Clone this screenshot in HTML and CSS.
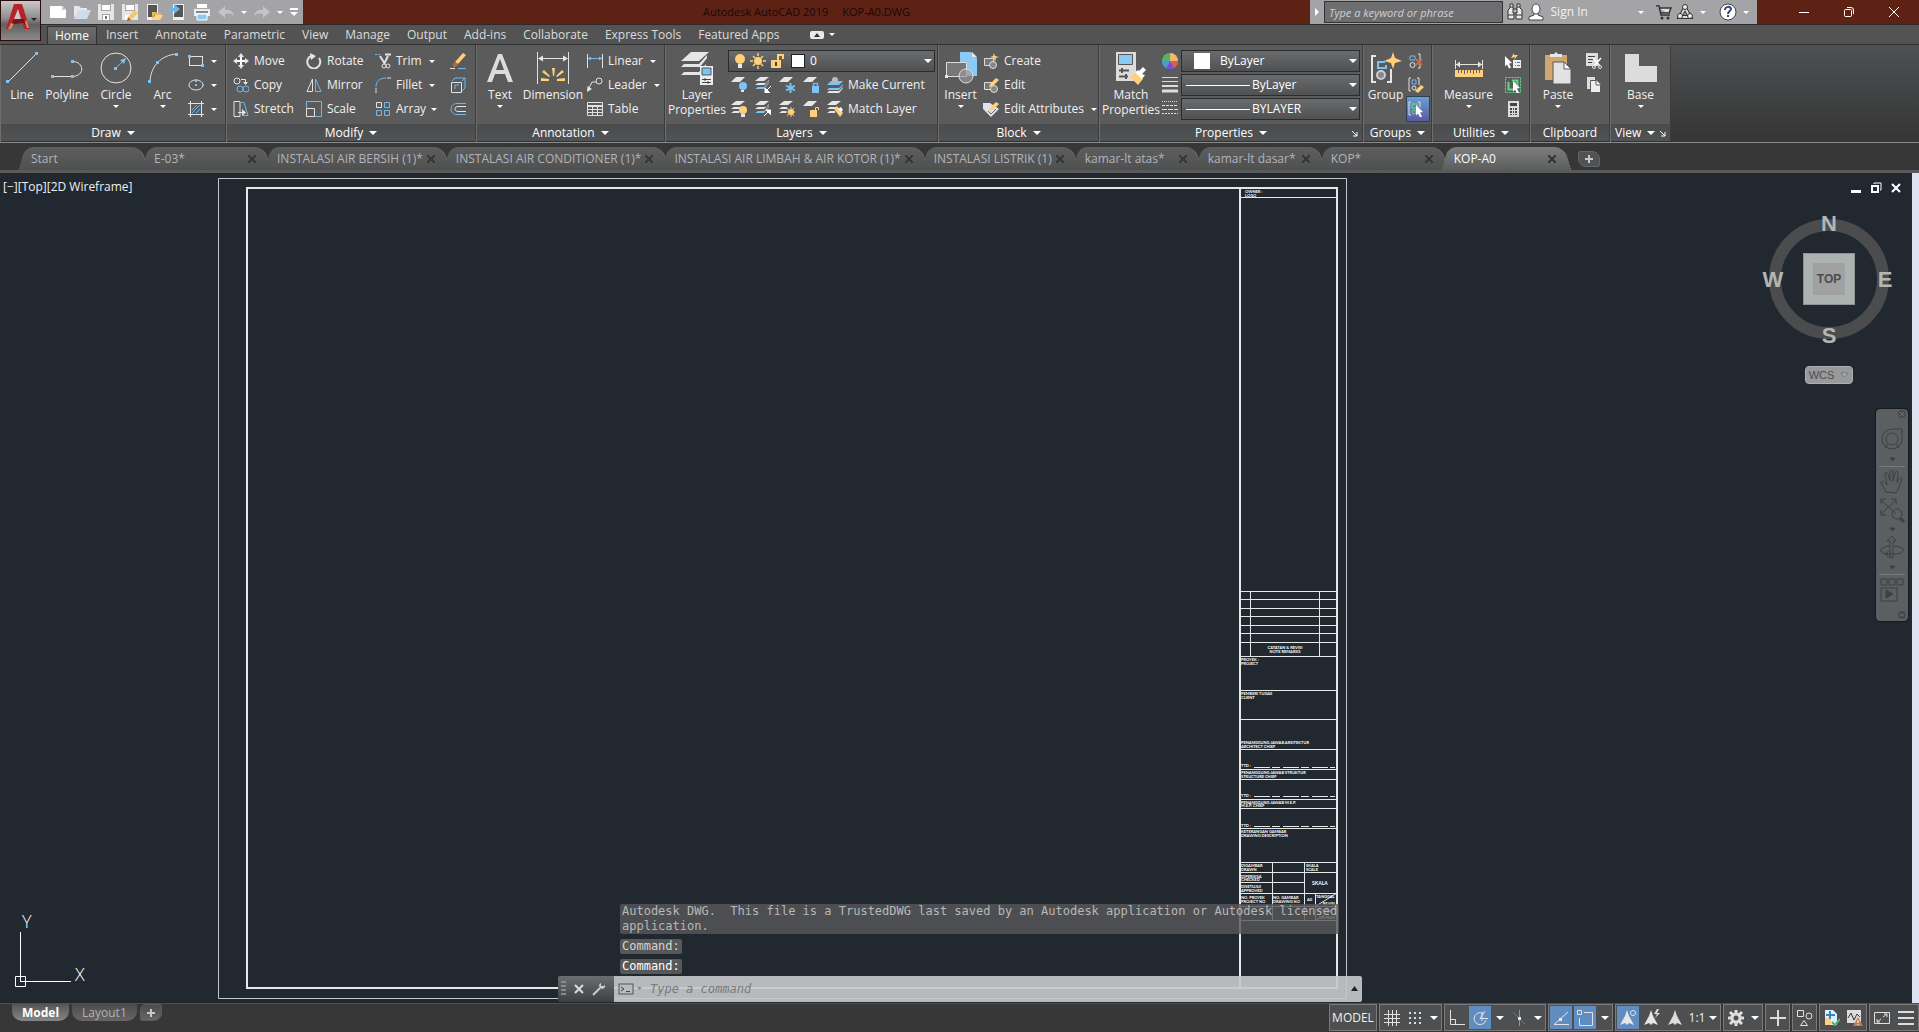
FILE: index.html
```html
<!DOCTYPE html>
<html lang="en">
<head>
  <meta charset="UTF-8" />
  <meta name="viewport" content="width=device-width, initial-scale=1.0" />
  <title>Autodesk AutoCAD 2019 - KOP-A0.DWG</title>
  <link rel="stylesheet" href="styles.css">
</head>
<body>
  <header class="titlebar">
    <button class="app-menu" aria-label="Application menu">
      <svg width="32" height="30" viewBox="0 0 32 30"><path d="M1 26 9 1h8l8 25h-6l-2-7H9l-3 7z" fill="#b8232b"/><path d="M13 6 9 16h7z" fill="#c9c9c9"/><path d="M9 16 4 26l6-5 9-1 2 4-2-8z" fill="#7d1419"/><path d="M6 20l-3 6h3l3-5zM20 19l2 6h2l-2-8z" fill="#c98d6b"/></svg>
      <span class="caret dark"></span>
    </button>
    <div class="quick-access">
      <button aria-label="New"><svg width="18" height="16"><path d="M1 2h12l4 4v8H1z" fill="#fff"/><path d="M13 2v4h4" fill="#ccc"/></svg></button>
      <button aria-label="Open"><svg width="18" height="16"><path d="M1 13V2h5l2 2h6v3" fill="#e8e8e8"/><path d="M1 15 5 6h13l-4 9z" fill="#cfdcec"/></svg></button>
      <button aria-label="Save"><svg width="18" height="18"><path d="M1 1h16v16H1z" fill="#e6e6e6"/><path d="M4 1h10v7H4zM5 11h8v6H5z" fill="#a5a5a7"/><path d="M5 2h8v5H5zM6 12h6v5H6z" fill="#fff"/><path d="M8 13h2v3H8z" fill="#777"/></svg></button>
      <button aria-label="Save As"><svg width="18" height="18"><path d="M1 1h16v16H1z" fill="#e6e6e6"/><path d="M4 1h10v7H4z" fill="#a5a5a7"/><path d="M5 2h8v5H5zM4 12h6v5H4z" fill="#fff"/><path d="m7 14 7-7 3 3-7 7z" fill="#f6c56b"/><path d="m7 14 3 3-4 1z" fill="#a85c3a"/></svg></button>
      <button aria-label="Open from Web"><svg width="18" height="18"><rect x="2" y="1" width="11" height="16" fill="#f0f0f0"/><rect x="3" y="2" width="9" height="12" fill="#555"/><path d="M7 17V9h4l1 1h4v2h-7z" fill="#e8b860"/><path d="m7 17 3-5h8l-3 5z" fill="#ffd484"/></svg></button>
      <button aria-label="Save to Web"><svg width="18" height="18"><rect x="4" y="1" width="11" height="16" fill="#f0f0f0"/><rect x="5" y="2" width="9" height="12" fill="#555"/><path d="M0 5h5V1l6 5-6 5V8H0z" fill="#6cb4ea"/></svg></button>
      <button aria-label="Plot"><svg width="18" height="18"><path d="M4 1h10v4H4z" fill="#fff"/><path d="M1 6h16v7H1z" fill="#eee"/><path d="M3 8h12v2H3z" fill="#888"/><path d="M4 11h10v6H4z" fill="#8cc8f4" stroke="#fff"/></svg></button>
      <button aria-label="Undo"><svg width="18" height="16"><path d="M1 8l7-6v4c5-1 8 1 9 6-3-3-6-3-9-2v4z" fill="#c4c4c6"/></svg></button>
      <button class="narrow" aria-label="Undo list"><span class="caret"></span></button>
      <button aria-label="Redo"><svg width="18" height="16"><path d="M17 8l-7-6v4c-5-1-8 1-9 6 3-3 6-3 9-2v4z" fill="#c4c4c6"/></svg></button>
      <button class="narrow" aria-label="Redo list"><span class="caret"></span></button>
      <button class="customize" aria-label="Customize toolbar"><span class="caret wide"></span></button>
    </div>
    <h1 class="title"><span>Autodesk AutoCAD 2019</span><span>KOP-A0.DWG</span></h1>
    <div class="info-center">
      <button class="fold" aria-label="Collapse search"><svg width="6" height="10"><path d="M1 1v8l4-4z" fill="#fff"/></svg></button>
      <input class="search" type="text" placeholder="Type a keyword or phrase" aria-label="Search">
      <button aria-label="Find"><svg width="18" height="18"><path d="M4 1h3v4l1 2v9H2V7l2-2zM11 1h3v4l2 2v9h-6V7l1-2z" fill="#e8e8e8" stroke="#333"/><path d="M7 6h4v4H7zM2 12h6M10 12h6M4 4h3M11 4h3" stroke="#333" fill="#bbb"/></svg></button>
      <button class="sign-in"><svg width="18" height="18"><path d="M7 10v2l-5 2v3h14v-3l-5-2v-2" fill="#fff" stroke="#444"/><ellipse cx="9" cy="6" rx="4" ry="5" fill="#fff" stroke="#444"/></svg>Sign In<span class="caret"></span></button>
      <button aria-label="App Store"><svg width="18" height="18"><path d="M1 3h3l2 9h9M5 5h11l-2 5H6" fill="#ddd" stroke="#333" stroke-width="1.5"/><circle cx="7" cy="15" r="1.5" fill="#333"/><circle cx="13" cy="15" r="1.5" fill="#333"/></svg></button>
      <button class="with-caret" aria-label="Stay connected"><svg width="18" height="18"><path d="m9 5 5 9H4z" fill="none" stroke="#333" stroke-width="4"/><path d="m9 5 5 9H4z" fill="none" stroke="#ddd" stroke-width="2"/><circle cx="9" cy="4" r="2.5" fill="#eee" stroke="#333"/><circle cx="4" cy="13" r="2.5" fill="#eee" stroke="#333"/><circle cx="14" cy="13" r="2.5" fill="#eee" stroke="#333"/></svg><span class="caret"></span></button>
      <button class="with-caret" aria-label="Help"><svg width="18" height="18"><circle cx="9" cy="9" r="8" fill="#fff" stroke="#444"/><path d="M6 7c0-4 6-4 6-1 0 2-3 2-3 5m0 1v2" fill="none" stroke="#34447c" stroke-width="2"/></svg><span class="caret"></span></button>
    </div>
    <div class="window-controls">
      <button aria-label="Minimize"><svg width="12" height="12"><path d="M1 6.5h10" stroke="#fff"/></svg></button>
      <button aria-label="Restore"><svg width="12" height="12" fill="none" stroke="#fff"><rect x="1.5" y="3.5" width="7" height="7" rx="1"/><path d="M4 1.5h4q2.500 0 2.500 2.500v4"/></svg></button>
      <button aria-label="Close"><svg width="12" height="12"><path d="m1 1 10 10M11 1 1 11" stroke="#fff"/></svg></button>
    </div>
  </header>

  <nav class="ribbon-tabs">
    <button class="active">Home</button>
    <button>Insert</button>
    <button>Annotate</button>
    <button>Parametric</button>
    <button>View</button>
    <button>Manage</button>
    <button>Output</button>
    <button>Add-ins</button>
    <button>Collaborate</button>
    <button>Express Tools</button>
    <button>Featured Apps</button>
    <button class="minimize" aria-label="Minimize ribbon"><svg width="14" height="8"><rect width="14" height="8" rx="2" fill="#e8eaec"/><path d="M4 6h6L7 2z" fill="#333"/></svg><span class="caret"></span></button>
  </nav>

  <div class="ribbon">
    <section class="panel draw">
      <div class="panel-body">
        <button class="big"><svg width="32" height="32"><path d="M2 30 30 2" class="w"/><path d="M0 28h3v3H0zM29 0h3v3h-3z" class="bf"/></svg>Line</button>
        <button class="big"><svg width="32" height="32"><path d="M2 24.500h19M21 9.500c13 0 13 15 0 15" class="w"/><path d="M0 23h3v3H0zM20 23h3v3h-3zM20 8h3v3h-3z" class="bf"/></svg>Polyline</button>
        <button class="big"><svg width="32" height="32"><circle cx="16" cy="16" r="15" class="w"/><path d="m16 16 8-8" class="b"/><path d="M14 15h3v3h-3zM26 6l-6 2 4 4z" class="bf"/></svg>Circle<span class="caret"></span></button>
        <button class="big"><svg width="32" height="32"><path d="M3 29C4 14 14 3 30 2" class="w"/><path d="M1 28h3v3H1zM9 9h3v3H9zM28 1h3v3h-3z" class="bf"/></svg>Arc<span class="caret"></span></button>
        <div class="stack">
          <button class="tool" aria-label="Rectangle"><svg width="16" height="16"><rect x="1.5" y="3.5" width="13" height="9" class="w"/><path d="M0 2h3v3H0zM13 11h3v3h-3z" class="bf"/></svg><span class="caret"></span></button>
          <button class="tool" aria-label="Ellipse"><svg width="16" height="16"><ellipse cx="8" cy="8" rx="7" ry="5" class="w"/><path d="M7 2h2v3H7zM7 7h2v2H7zM14 7h2v2h-2z" class="bf"/></svg><span class="caret"></span></button>
          <button class="tool" aria-label="Hatch"><svg width="16" height="16"><path d="M2.500 0v16M13.500 0v16M0 2.500h16M0 13.500h16" class="w"/><path d="m4 9 5-5M4 12l8-8M8 12l4-4" class="b"/></svg><span class="caret"></span></button>
        </div>
      </div>
      <h2>Draw<span class="caret wide"></span></h2>
    </section>

    <section class="panel modify">
      <div class="panel-body">
        <div class="stack">
          <button class="tool"><svg width="16" height="16"><path d="M8 2v12M2 8h12" stroke="#fff" stroke-width="2"/><path d="m8 0 3 4H5zM8 16l3-4H5zM0 8l4-3v6zM16 8l-4-3v6z" class="wf"/></svg>Move</button>
          <button class="tool"><svg width="16" height="16"><circle cx="4" cy="4" r="3" class="w"/><circle cx="7" cy="12" r="3" class="b"/><circle cx="13" cy="12" r="3" class="b"/><path d="M8 2.500h4.500V6" class="w"/><path d="M10 5h5l-2.500 3z" class="wf"/></svg>Copy</button>
          <button class="tool"><svg width="16" height="16"><path d="M1 .5h6v15H1zM5 11.500h6" class="w"/><path d="m9 8 4 3.500L9 15z" class="wf"/><path d="M8 1.500h3l4 13h-5" class="b"/></svg>Stretch</button>
        </div>
        <div class="stack">
          <button class="tool"><svg width="16" height="16"><path d="M5 3a6.500 6.500 0 1 0 8 2" class="w" stroke-width="2"/><path d="m4 0 6 3-5 4z" class="wf"/></svg>Rotate</button>
          <button class="tool"><svg width="16" height="16"><path d="M6.500 2v12.500H1z" class="w"/><path d="M9.500 2v12.500H15z" class="b"/></svg>Mirror</button>
          <button class="tool"><svg width="16" height="16"><path d="M.5 7V.5h15v15H9" class="b"/><path d="M.5 7.500h8v8h-8z" class="w"/></svg>Scale</button>
        </div>
        <div class="stack">
          <button class="tool split"><svg width="16" height="16"><path d="M0 1.500h6" class="b" stroke-dasharray="2 1"/><path d="M10 1.500h6M5 3l5 8M13 3l-4 8" class="w" stroke-width="2"/><circle cx="9" cy="13" r="2" class="w"/><circle cx="13" cy="13" r="2" class="w"/></svg>Trim<span class="caret"></span></button>
          <button class="tool split"><svg width="16" height="16"><path d="M1 10C1 4 5 1 11 1" class="b"/><path d="M1 11v5M12 1h4" class="w"/></svg>Fillet<span class="caret"></span></button>
          <button class="tool split"><svg width="16" height="16"><path d="M1.500 1.500h5v5h-5z" class="w"/><path d="M9.500 1.500h5v5h-5zM1.500 9.500h5v5h-5zM9.500 9.500h5v5h-5z" class="b"/></svg>Array<span class="caret"></span></button>
        </div>
        <div class="stack">
          <button class="tool" aria-label="Erase"><svg width="16" height="16"><path d="M5 9 13 0l3 2-8 9z" class="yf"/><path d="m3 11 2-2 3 2-2 3H3z" fill="#b5674a"/><path d="M0 15.500h5" class="w"/><path d="M8 15.500h8" class="b"/></svg></button>
          <button class="tool" aria-label="Explode"><svg width="16" height="16"><path d="M1.500 5.500h10v10h-10z" class="w"/><path d="m2 4 3-3h10v10l-3 3M12 4l3-3M5 12V8h4" class="b"/></svg></button>
          <button class="tool" aria-label="Offset"><svg width="16" height="16"><path d="M16 2.500H7c-8 0-8 11 0 11h9" class="b"/><path d="M16 5.500H8c-4 0-4 5 0 5h8" class="w"/></svg></button>
        </div>
      </div>
      <h2>Modify<span class="caret wide"></span></h2>
    </section>

    <section class="panel annotation">
      <div class="panel-body">
        <button class="big"><svg width="32" height="32"><path d="M3 30 14 2h4l11 28h-5l-3-8H11l-3 8zM12 18h8L16 7z" fill="#dcdcdc" fill-rule="evenodd"/></svg>Text<span class="caret"></span></button>
        <button class="big"><svg width="32" height="32"><path d="M.5 0v32M31.500 0v32M2 6.500h28" class="w"/><path d="m1 6.500 5-3v6zM31 6.500l-5-3v6z" class="wf"/><path d="M15 16h3l-1 8h-1zM7 18l6 6-1 1-7-5zM25 18l-6 6 1 1 7-5zM4 26l8 1v2H4zM28 26l-8 1v2h8z" class="yf"/></svg>Dimension</button>
        <div class="stack">
          <button class="tool split"><svg width="16" height="16"><path d="M.5 1v14M15.500 1v14" class="w"/><path d="M1 5.500h14" class="b"/><path d="m1 5.500 3-2v4zM15 5.500l-3-2v4z" class="bf"/></svg>Linear<span class="caret"></span></button>
          <button class="tool split"><svg width="16" height="16"><circle cx="12" cy="4" r="3" class="w"/><path d="M9 5H5L1 13" class="w"/><path d="m0 15 .5-6L5 12z" class="wf"/></svg>Leader<span class="caret"></span></button>
          <button class="tool"><svg width="16" height="16"><path d="M.5 1.500h15v13H.5zM0 5.500h16M0 8.500h16M0 11.500h16M5.500 5v9M10.500 5v9M0 4.500h16" class="w"/></svg>Table</button>
        </div>
      </div>
      <h2>Annotation<span class="caret wide"></span></h2>
    </section>

    <section class="panel layers">
      <div class="panel-body">
        <button class="big"><svg width="32" height="34"><path d="M10 0h18L18 9H0zM18 12 26 3v3l-7 9H0l3-3zM18 20l7-8v3l-6 8H0l3-3z" class="wf"/><path d="M19 14h13v19H19z" fill="#eee"/><path d="M21 16h9v7h-9z" fill="#7cc4f4" stroke="#555"/><path d="M21 27.500h9M21 30.500h9M24 26v3M27 29v3" stroke="#444"/></svg>Layer<br>Properties</button>
        <div class="stack">
          <label class="combo layer-combo">
            <svg width="64" height="16"><circle cx="7" cy="6" r="5" class="yf"/><path d="M5 11h4v4H5z" class="wf"/><circle cx="25" cy="8" r="4" class="yf"/><path d="M25 0v3M25 13v3M17 8h3M30 8h3M20 3l2 2M28 11l2 2M20 13l2-2M28 5l2-2" stroke="#ffcf7a" stroke-width="1.500"/><path d="M38 7h10v8H38z" class="yf"/><path d="M45 7V2h5v4" fill="none" stroke="#ffcf7a" stroke-width="2"/><path d="M42 9h2v4h-2z" fill="#444"/></svg>
            <span class="swatch"></span>
            <select aria-label="Layer"><option>0</option></select>
            <span class="caret wide"></span>
          </label>
          <div class="icon-row">
            <button aria-label="Layer off"><svg width="16" height="16"><path d="M5 0h9L9 5H0z" class="wf"/><circle cx="12" cy="9" r="4" class="bf"/><path d="M10 13h3v2h-3z" class="wf"/></svg></button>
            <button aria-label="Isolate"><svg width="16" height="16"><path d="M5 0h9L9 4H0z" class="wf"/><path d="M3 6h8l3-3v1L9 8H0z" class="wf"/><path d="M3 10h6l5-5v1l-5 6H0z" class="bf"/><path d="m16 9-5 5M10 11v5h5z" stroke="#fff" fill="#fff"/></svg></button>
            <button aria-label="Freeze"><svg width="16" height="16"><path d="M5 0h9L9 5H0z" class="wf"/><path d="M11.500 6v10M7 8.500l9 5M16 8.500l-9 5" stroke="#7cc0f0" stroke-width="2"/></svg></button>
            <button aria-label="Lock"><svg width="16" height="16"><path d="M5 0h9L9 5H0z" class="wf"/><path d="M9 9h7v7H9z" class="bf"/><path d="M10.500 9V6.500h4V9" class="b" stroke-width="1.500"/></svg></button>
            <button class="tool"><svg width="16" height="16"><path d="M4 4h12l-4 4H0zM4 11h8l4-4v1l-4 5H0l2-2z" class="bf"/><path d="M2 14h10l4-4v1l-4 5H0z" class="wf"/><circle cx="8" cy="3" r="3" fill="#bbb"/></svg>Make Current</button>
          </div>
          <div class="icon-row">
            <button aria-label="Turn all on"><svg width="16" height="16"><path d="M5 0h9L9 4H0zM3 6h6v2H0zM3 10h5v2H0z" class="wf"/><circle cx="12" cy="9" r="4" class="yf"/><path d="M10 13h4v3h-4z" class="wf"/></svg></button>
            <button aria-label="Unisolate"><svg width="16" height="16"><path d="M5 0h9L9 4H0zM3 6h8l3-3v1L9 8H0z" class="wf"/><path d="M3 10h6l5-5v1l-5 6H0z" class="bf"/><path d="m9 15 5-5M11 9h5v5z" stroke="#fff" fill="#fff"/></svg></button>
            <button aria-label="Thaw"><svg width="16" height="16"><path d="M5 0h9L9 4H0zM3 6h5v2H0zM3 10h4v2H0z" class="wf"/><circle cx="12" cy="11" r="3" class="yf"/><path d="M12 6v10M7 11h9M8 7l7 8M15 7l-7 8" stroke="#ffcf7a"/></svg></button>
            <button aria-label="Unlock"><svg width="16" height="16"><path d="M5 0h9L9 5H0z" class="wf"/><path d="M7 9h7v7H7z" class="yf"/><path d="M12.500 9V6.500h3V9" fill="none" stroke="#ffcf7a"/></svg></button>
            <button class="tool"><svg width="16" height="16"><path d="M5 0h9L9 4H0zM3 6h8v2H0zM3 10h5v2H0z" class="wf"/><path d="m7 8 3-3 6 7-3 4z" class="yf"/><path d="m11 8 3-2 2 3-2 2z" fill="#fff"/></svg>Match Layer</button>
          </div>
        </div>
      </div>
      <h2>Layers<span class="caret wide"></span></h2>
    </section>

    <section class="panel block">
      <div class="panel-body">
        <button class="big"><svg width="32" height="32"><path d="M15 0h11l6 6v18H15z" fill="#8ccaf6"/><path d="M27 0v5h5z" class="wf"/><path d="M1.500 10.500h20v14h-20z" fill="#777" stroke="#ddd"/><circle cx="21" cy="24" r="7" fill="#999a" stroke="#ddd"/><path d="M0 23h3v3H0z" class="wf"/></svg>Insert<span class="caret"></span></button>
        <div class="stack">
          <button class="tool"><svg width="16" height="16"><path d="M1.500 5.500h9v7h-9z" fill="#777" stroke="#ddd"/><circle cx="10" cy="12" r="3.500" fill="#888" stroke="#ddd"/><path d="m11 0 1 3 4 1-3 1-1 4-1-4-4-1 3-1z" class="yf"/></svg>Create</button>
          <button class="tool"><svg width="16" height="16"><path d="M1.500 5.500h9v7h-9z" fill="#777" stroke="#ddd"/><circle cx="11" cy="12" r="3.500" fill="#888" stroke="#ddd"/><path d="m7 7 6-6 3 2-6 6-4 1z" class="yf"/></svg>Edit</button>
          <button class="tool split"><svg width="16" height="16"><path d="M0 2h7l9 6-8 8-8-8z" fill="#dde3ee"/><path d="m5 10 3 3 5-5" stroke="#667" fill="none"/><path d="m7 7 6-6 3 2-6 6-4 1z" class="yf"/></svg>Edit Attributes<span class="caret"></span></button>
        </div>
      </div>
      <h2>Block<span class="caret wide"></span></h2>
    </section>

    <section class="panel properties">
      <div class="panel-body">
        <button class="big"><svg width="32" height="34"><path d="M1 0h20v29H1z" fill="#dcdcdc"/><path d="M3.500 2.500h14v10h-14z" fill="#8ccaf6" stroke="#555"/><path d="M4 18.500h10M4 24.500h9M7 16v5M11 22v5" stroke="#555" stroke-width="2"/><path d="m15 25 6-5 7 7-5 6z" class="yf"/><path d="m20 20 3-2 1 1 4-4 3 3-4 4 3 1-3 4z" fill="#fff"/></svg>Match<br>Properties</button>
        <div class="prop-grid">
          <svg width="16" height="16"><circle cx="8" cy="8" r="8" fill="#56b26a"/><path d="M8 8V0a8 8 0 0 1 8 8z" fill="#f2b86a"/><path d="M8 8h8a8 8 0 0 1-4 7z" fill="#d8604a"/><path d="m8 8 4 7a8 8 0 0 1-8 0z" fill="#7c4ae0"/><path d="m8 8-4 7a8 8 0 0 1-4-7z" fill="#4a9ad8"/></svg>
          <label class="combo"><span class="swatch large"></span><select aria-label="Object color"><option>ByLayer</option></select><span class="caret wide"></span></label>
          <svg width="16" height="16"><path d="M0 .5h16M0 4.500h16" stroke="#ddd"/><path d="M0 9h16" stroke="#ddd" stroke-width="2"/><path d="M0 14h16" stroke="#ddd" stroke-width="3"/></svg>
          <label class="combo"><span class="line"></span><select aria-label="Lineweight"><option>ByLayer</option></select><span class="caret wide"></span></label>
          <svg width="16" height="16"><path d="M0 .5h16" stroke="#ddd" stroke-dasharray="1 1"/><path d="M0 4.500h16" stroke="#ddd" stroke-dasharray="3 1"/><path d="M0 8.500h16" stroke="#ddd" stroke-dasharray="5 1"/><path d="M0 12.500h16" stroke="#ddd" stroke-dasharray="2 1"/></svg>
          <label class="combo"><span class="line"></span><select aria-label="Linetype"><option>BYLAYER</option></select><span class="caret wide"></span></label>
        </div>
      </div>
      <h2>Properties<span class="caret wide"></span><svg class="launcher" width="7" height="7"><path d="m1 1 5 5M6 2v4H2" stroke="#fff" fill="none"/></svg></h2>
    </section>

    <section class="panel groups">
      <div class="panel-body">
        <button class="big"><svg width="32" height="32"><path d="M6 4H2v26h4M17 30h4V17" fill="none" stroke="#e6e6e6" stroke-width="2"/><path d="M15 10H8v6h8v-3" fill="none" stroke="#7cc0f0" stroke-width="2"/><circle cx="11" cy="23" r="4" fill="#888" stroke="#ccc" stroke-width="2"/><path d="m23 0 2 6 7 3-7 2-2 6-2-6-7-2 7-3z" class="yf"/></svg>Group</button>
        <div class="stack">
          <button class="tool" aria-label="Ungroup"><svg width="16" height="16"><path d="M10 1h2v14h-2" class="w"/><path d="M2 3h5v4H2z" class="b"/><circle cx="4.500" cy="12" r="2.500" class="w"/><path d="m8 6 6 6M14 6l-6 6" stroke="#c8694a" stroke-width="2"/></svg></button>
          <button class="tool" aria-label="Group edit"><svg width="16" height="16"><path d="M3 1H1v13h2M9 1h2v7" class="w"/><path d="M4 3h4v4H4z" class="b"/><circle cx="6" cy="11" r="2" class="w"/><path d="m7 14 6-6 3 2-6 6z" class="yf"/></svg></button>
          <button class="tool pressed" aria-label="Group selection on"><svg width="16" height="16"><path d="M3 1H1v13h2M10 1h2v5" class="w"/><rect x="4" y="3" width="5" height="4" fill="none" stroke="#62d88a"/><circle cx="6" cy="11" r="2" fill="none" stroke="#62d88a"/><path d="m8 4 7 7-3 .5 2 4-2 1-2-4-2 2z" fill="#fff"/></svg></button>
        </div>
      </div>
      <h2>Groups<span class="caret wide"></span></h2>
    </section>

    <section class="panel utilities">
      <div class="panel-body">
        <button class="big"><svg width="32" height="32"><path d="M2.500 8v9M29.500 8v9M3 12.500h26" class="w"/><path d="m3 12.500 4-3v6zM29 12.500l-4-3v6z" class="wf"/><path d="M2 18h28v7H2z" class="yf"/><path d="M5.500 18v3M8.500 18v3M11.500 18v4M14.500 18v3M17.500 18v3M20.500 18v4M23.500 18v3M26.500 18v3" stroke="#666"/></svg>Measure<span class="caret"></span></button>
        <div class="stack">
          <button class="tool" aria-label="Quick select"><svg width="16" height="16"><path d="M8 7h8v8H8z" fill="#eee"/><path d="M10 9.500h1M12 9.500h3M10 12.500h1M12 12.500h3" stroke="#3a78b8"/><path d="M9 0 6 5l4-1-1 3 4-5H9z" class="yf"/><path d="m0 3 7 7-3 .5 2 4-2 1-2-4-2 2z" fill="#fff"/></svg></button>
          <button class="tool" aria-label="Select all"><svg width="16" height="16" fill="none" stroke="#62d88a"><path d="M.5.5h15v15H.5z" stroke-dasharray="2 1"/><path d="M3.500 5v7.500H10V5M7 3.500h5.500v6" stroke-width="2"/><path d="m8 4 7 7-3 .5 2 4-2 1-2-4-2 2z" fill="#fff" stroke="none"/></svg></button>
          <button class="tool" aria-label="Quick calculator"><svg width="16" height="16"><path d="M3 0h11v16H3z" fill="#ddd"/><path d="M5 2h7v3H5zM5 7h2v2H5zM8 7h1v2H8zM10 7h2v2h-2zM5 10h2v2H5zM8 10h1v2H8zM10 10h2v2h-2zM5 13h2v1H5zM8 13h1v1H8zM10 13h2v1h-2z" fill="#444"/></svg></button>
        </div>
      </div>
      <h2>Utilities<span class="caret wide"></span></h2>
    </section>

    <section class="panel clipboard">
      <div class="panel-body">
        <button class="big"><svg width="32" height="32"><path d="M3 3h22v25H3z" fill="#d2a670"/><path d="M8 2h4l2-2 2 2h4v3H8z" class="wf"/><path d="M11 10h11l7 7v15H11z" fill="#e2e2e2" stroke="#5b5b5b"/><path d="M22 10v7h7z" fill="#fff" stroke="#5b5b5b"/></svg>Paste<span class="caret"></span></button>
        <div class="stack">
          <button class="tool" aria-label="Cut"><svg width="16" height="16"><path d="M0 0h12v13H0z" fill="#ddd"/><path d="M2 3.500h7M2 6.500h5M2 9.500h4" stroke="#444"/><path d="m7 5 7 8M15 5l-7 8" stroke="#fff" stroke-width="1.500"/><circle cx="8" cy="14" r="1.500" class="w"/><circle cx="14" cy="14" r="1.500" class="w"/></svg></button>
          <button class="tool" aria-label="Copy clip"><svg width="16" height="16"><path d="M1 0h8v12H1z" fill="#ddd"/><path d="M4.500 3.500h6l4 4v8h-10z" fill="#eee" stroke="#5b5b5b"/><path d="M10 3v5h5" stroke="#5b5b5b" fill="#fff"/></svg></button>
        </div>
      </div>
      <h2>Clipboard</h2>
    </section>

    <section class="panel view">
      <div class="panel-body">
        <button class="big"><svg width="32" height="32"><path d="M0 2h14v12h18v16H0z" fill="#dcdcdc"/></svg>Base<span class="caret"></span></button>
      </div>
      <h2>View<span class="caret wide"></span><svg class="launcher" width="7" height="7"><path d="m1 1 5 5M6 2v4H2" stroke="#fff" fill="none"/></svg></h2>
    </section>
  </div>

  <nav class="file-tabs">
    <button class="file-tab">Start</button>
    <button class="file-tab">E-03*<span class="x"></span></button>
    <button class="file-tab">INSTALASI AIR BERSIH (1)*<span class="x"></span></button>
    <button class="file-tab">INSTALASI AIR CONDITIONER (1)*<span class="x"></span></button>
    <button class="file-tab">INSTALASI AIR LIMBAH &amp; AIR KOTOR (1)*<span class="x"></span></button>
    <button class="file-tab">INSTALASI LISTRIK (1)<span class="x"></span></button>
    <button class="file-tab">kamar-lt atas*<span class="x"></span></button>
    <button class="file-tab">kamar-lt dasar*<span class="x"></span></button>
    <button class="file-tab">KOP*<span class="x"></span></button>
    <button class="file-tab active">KOP-A0<span class="x"></span></button>
    <button class="new-tab" aria-label="New drawing"><svg width="8" height="8"><path d="M4 0v8M0 4h8" stroke="#c8c8c8" stroke-width="2"/></svg></button>
  </nav>

  <main class="workspace">
    <div class="canvas">
      <svg class="sheet" width="1400" height="830" viewBox="0 173 1400 830">
        <g class="border">
          <path d="M218.500 178.500h1128v820h-1128z" stroke="#c4c8c8"/>
          <path d="M247 188h1090v800H247z" stroke-width="2"/>
          <path d="M1240 188v800" stroke-width="2"/>
        </g>
        <g class="border">
          <path d="M1240 197.500h97M1240 591.500h97M1240 599.500h97M1240 608.500h97M1240 616.500h97M1240 625.500h97M1240 633.500h97M1240 642.500h97M1240 656.500h97M1240 690.500h97M1240 719.500h97M1240 749.500h97M1240 769.500h97M1240 779.500h97M1240 799.500h97M1240 808.500h97M1240 828.500h97"/>
          <path d="M1250.500 591v65M1319.500 591v65"/>
          <path d="M1254 767.500h81M1254 796.500h81M1254 826.500h81" stroke-dasharray="16 2 8 3"/>
          <path d="M1240 862.500h97M1240 872.500h97M1240 882.500h65M1240 893.500h97M1240 906.500h97M1240 920.500h97M1272.500 862v58M1304.500 862v58M1315.500 893v27M1316 906l21-13M1316 920l21-13"/>
        </g>
        <g class="notes">
          <text x="1245" y="193">OWNER :</text><text x="1245" y="197">LOGO</text>
          <text x="1285" y="649" text-anchor="middle">CATATAN &amp; REVISI</text><text x="1285" y="653" text-anchor="middle">NOTE REMARKS</text>
          <text x="1241" y="661">PROYEK :</text><text x="1241" y="665">PROJECT</text>
          <text x="1241" y="695">PEMBERI TUGAS</text><text x="1241" y="699">CLIENT</text>
          <text x="1241" y="744">PENANGGUNG JAWAB ARSITEKTUR</text><text x="1241" y="748">ARCHITECT CHIEF</text>
          <text x="1241" y="767">TTD :</text>
          <text x="1241" y="774">PENANGGUNG JAWAB STRUKTUR</text><text x="1241" y="778">STRUCTURE CHIEF</text>
          <text x="1241" y="797">TTD :</text>
          <text x="1241" y="804">PENANGGUNG JAWAB M.E.P.</text><text x="1241" y="807">M.E.P. CHIEF</text>
          <text x="1241" y="827">TTD :</text>
          <text x="1241" y="833">KETERANGAN GAMBAR</text><text x="1241" y="837">DRAWING DESCRIPTION</text>
          <text x="1241" y="867">DIGAMBAR</text><text x="1241" y="871">DRAWN</text><text x="1306" y="867">SKALA</text><text x="1306" y="871">SCALE</text>
          <text x="1241" y="878">DIPERIKSA</text><text x="1241" y="881">CHECKED</text>
          <text x="1241" y="888">DISETUJUI</text><text x="1241" y="892">APPROVED</text>
          <text x="1241" y="899">NO. PROYEK</text><text x="1241" y="903">PROJECT NO</text>
          <text x="1273" y="899">NO. GAMBAR</text><text x="1273" y="903">DRAWING NO</text>
          <text x="1307" y="901">A0</text><text x="1316" y="898">TANGGAL</text><text x="1335" y="905" text-anchor="end">REVISI</text>
          <text x="1318" y="912">KODE</text><text x="1335" y="919" text-anchor="end">LEMBAR</text>
          <text class="scale" x="1312" y="885">SKALA</text>
        </g>
      </svg>

      <svg class="ucs" width="90" height="84"><path d="M6.500 23v49M6 72.500h51M1.500 67.500h10v10h-10z" fill="none" stroke="#fff"/><text x="8" y="19">Y</text><text x="61" y="72">X</text></svg>

      <div class="viewport-label"><button>[−]</button><button>[Top]</button><button>[2D Wireframe]</button></div>
      <div class="viewport-controls">
        <button aria-label="Minimize drawing"><svg width="12" height="12"><path d="M1 9.500h10" stroke="#fff" stroke-width="3"/></svg></button>
        <button aria-label="Restore drawing"><svg width="12" height="12"><path d="M4 2V1h7v7h-1" fill="none" stroke="#fff"/><path d="M2 4h6v6H2z" fill="none" stroke="#fff" stroke-width="2"/></svg></button>
        <button aria-label="Close drawing"><svg width="12" height="12"><path d="m2 2 8 8M10 2l-8 8" stroke="#fff" stroke-width="2"/></svg></button>
      </div>

      <div class="viewcube">
        <svg width="140" height="146" viewBox="0 -8 140 146">
          <circle cx="70" cy="65" r="54" fill="none" stroke="#4b4c4d" stroke-width="12"/>
          <rect x="44.500" y="39.500" width="51" height="51" fill="#abb2af" stroke="#8e9492"/>
          <rect x="54" y="49" width="32" height="32" fill="#a0a1a3"/>
          <text x="70" y="69" class="face">TOP</text>
          <text x="70" y="17">N</text><text x="70" y="129">S</text><text x="14" y="73">W</text><text x="126" y="73">E</text>
        </svg>
        <button class="wcs">WCS<svg width="9" height="6"><path d="M1 1h7L4.500 5z" fill="#b5b5b5" stroke="#777"/></svg></button>
      </div>

      <div class="navbar">
        <svg width="32" height="212" fill="none" stroke="#3d4042">
          <circle cx="26" cy="5" r="4" fill="#484b4d" stroke="none"/><path d="m24 3 4 4M28 3l-4 4" stroke="#707375"/>
          <path d="M16 20h10v10a10 10 0 1 1-10-10z"/><circle cx="16" cy="30" r="6"/><path d="m12 35-3 4M20 35l3 4"/>
          <path d="M14 49h5l-2.500 3z" fill="#3d4042"/><path d="M3 57.500h26" stroke="#777a7c"/>
          <path d="m10 83-5-9c0-2 3-2 4 0l2 2-2-11c0-2 2-2 3 0l2 7V63c0-2 3-2 3 0v9l2-8c1-2 3-2 3 0l-1 10 2-4c1-2 3-1 3 0l-4 10-2 4z"/>
          <path d="m5 91 15 14M20 91 5 105M5 95v-5h5M15 90h5v5M5 101v5h5"/><circle cx="21" cy="105" r="5"/><path d="m24 109 4 4" stroke-width="3"/>
          <path d="M14 119h5l-2.500 3z" fill="#3d4042"/>
          <path d="M14 149v-17h-3l5-5 4 5h-3v17zM14 137c-12 1-12 8-2 8M18 137c13 1 12 8 0 8h-9m4-3-4 3 4 3"/>
          <path d="M14 157h5l-2.500 3z" fill="#3d4042"/><path d="M3 165.500h26" stroke="#777a7c"/>
          <path d="M5 170h6v6H5zM13 170h6v6h-6zM21 170h6v6h-6zM5 179h16v13H5z"/><path d="m10 181 7 4-7 4z" fill="#3d4042"/>
          <circle cx="26" cy="206" r="4" fill="#484b4d" stroke="none"/><path d="M24 206h4" stroke="#707375"/>
        </svg>
      </div>

      <div class="command">
        <div class="history">
          <p class="old">Autodesk DWG.&nbsp; This file is a TrustedDWG last saved by an Autodesk application or Autodesk licensed<br>application.</p>
          <p>Command:</p>
          <p class="latest">Command:</p>
        </div>
        <div class="command-bar">
          <div class="command-tools">
            <span class="grip"></span>
            <button aria-label="Close command line"><svg width="10" height="10"><path d="m1 1 8 8M9 1 1 9" stroke="#ddd" stroke-width="2"/></svg></button>
            <button aria-label="Customize"><svg width="14" height="14"><path d="m1 13 7-7" stroke="#ccc" stroke-width="2"/><path d="M13 3a3 3 0 1 1-4-2v3h3z" fill="#ccc"/></svg></button>
          </div>
          <label class="command-input">
            <svg width="26" height="12"><rect x="1" y="1" width="14" height="10" fill="#b8bcba" stroke="#555"/><path d="m3 4 3 2-3 2M8 8.500h4" fill="none" stroke="#444"/><path d="M19 4h5l-2.500 3z" fill="#888"/></svg>
            <input type="text" placeholder="Type a command" aria-label="Command">
          </label>
          <button class="recent" aria-label="Recent commands"><svg width="8" height="6"><path d="M0 5h7L3.500 0z" fill="#222"/></svg></button>
        </div>
      </div>
    </div>
  </main>

  <footer class="bottom">
    <div class="layout-tabs">
      <button class="layout-tab active">Model</button>
      <button class="layout-tab">Layout1</button>
      <button class="layout-tab add" aria-label="New layout"><svg width="8" height="8"><path d="M4 0v8M0 4h8" stroke="#c8c8c8" stroke-width="2"/></svg></button>
    </div>
    <div class="status">
      <div class="group"><button class="space">MODEL</button></div>
      <div class="group">
        <button aria-label="Grid"><svg width="16" height="16"><path d="M4.500 0v16M8.500 0v16M12.500 0v16M0 4.500h16M0 8.500h16M0 12.500h16" class="w"/></svg></button>
        <button aria-label="Snap"><svg width="16" height="16"><path d="M2 3h12M2 8h12M2 13h12" stroke="#ddd" stroke-width="2" stroke-dasharray="2 3"/></svg></button>
        <button class="drop" aria-label="Snap settings"><span class="caret wide"></span></button>
      </div>
      <div class="group">
        <button aria-label="Ortho"><svg width="16" height="16"><path d="M1.500 0v14.500H16M1.500 9.500h5v5" class="w"/></svg></button>
        <button class="on" aria-label="Polar"><svg width="16" height="16"><path d="M14 10a6 6 0 1 1-2-6M16 8.500H8L13 1M10 2v9" class="w"/></svg></button>
        <button class="drop" aria-label="Polar settings"><span class="caret wide"></span></button>
        <button aria-label="Isodraft"><svg width="16" height="16"><path d="m2 2 12 12" stroke="#a8644a"/><path d="M8.500 0v16" stroke="#58b87c"/><path d="M7 7h3v3H7z" class="wf"/></svg></button>
        <button class="drop" aria-label="Isodraft settings"><span class="caret wide"></span></button>
      </div>
      <div class="group">
        <button class="on" aria-label="Object snap tracking"><svg width="16" height="16"><path d="M15 2 1 14.500h15" class="w"/><path d="M6 8h3v3H6z" class="wf"/></svg></button>
        <button class="on" aria-label="Object snap"><svg width="18" height="18"><path d="M8 3.500h8.500v13h-13V9M1.500 1.500h4v4h-4z" class="w"/></svg></button>
        <button class="drop" aria-label="Object snap settings"><span class="caret wide"></span></button>
      </div>
      <div class="group">
        <button class="on" aria-label="Annotation visibility"><svg width="16" height="18"><path d="m7 1 2 6 5 9-5-2-2 2-2-2-5 2 5-9z" class="wf"/><circle cx="13" cy="4" r="2.500" class="w"/></svg></button>
        <button aria-label="Auto scale"><svg width="16" height="18"><path d="m7 1 2 6 5 9-5-2-2 2-2-2-5 2 5-9z" class="wf"/><path d="m13 0-3 5h3l-2 4 5-5h-3l2-4z" fill="#ddd"/></svg></button>
        <button aria-label="Annotation scale"><svg width="16" height="18"><path d="m8 1 2 6 5 9-5-2-2 2-2-2-5 2 5-9z" fill="#ddd"/></svg></button>
        <button class="ratio">1:1<span class="caret wide"></span></button>
      </div>
      <div class="group">
        <button aria-label="Workspace"><svg width="16" height="16"><circle cx="8" cy="8" r="4" fill="none" stroke="#ddd" stroke-width="3"/><path d="M8 0v3M8 13v3M0 8h3M13 8h3M2 2l3 3M11 11l3 3M14 2l-3 3M5 11l-3 3" stroke="#ddd" stroke-width="3"/></svg></button>
        <button class="drop" aria-label="Workspace list"><span class="caret wide"></span></button>
      </div>
      <div class="group"><button aria-label="Annotation monitor"><svg width="16" height="16"><path d="M8 0v16M0 8h16" stroke="#ddd" stroke-width="2"/></svg></button></div>
      <div class="group"><button aria-label="Isolate objects"><svg width="16" height="16"><path d="M.5.500h6v6h-6zM7 10.500l3.500 5h-7z" class="w"/><circle cx="12" cy="6" r="3" class="w"/></svg></button></div>
      <div class="group">
        <button aria-label="Hardware acceleration"><svg width="16" height="16"><path d="M1 0h8l4 4v11H1z" fill="#dff0ff"/><path d="M1 8h6v7H1z" class="yf"/><path d="M6 1v8M2 5h9" stroke="#2b88cc" stroke-width="2"/><path d="m8 12 3 3 5-6" fill="none" stroke="#52b080" stroke-width="2"/></svg></button>
        <button aria-label="Performance"><svg width="16" height="16"><path d="M0 0h14v13H0z" fill="#ddd"/><path d="M1 8l3-5 3 7 3-6 3 3" fill="none" stroke="#333"/><path d="m11 7 5 9H6z" fill="#c87858"/><path d="M11 10v3M11 14v1" stroke="#fff"/></svg></button>
      </div>
      <div class="group">
        <button aria-label="Clean screen"><svg width="16" height="16"><path d="M.5 2.500h15v11H.5zM9 7l4-3m-3 0h3v3M7 9l-4 3m0-3v3h3" class="w"/></svg></button>
        <button aria-label="Customization"><svg width="16" height="16"><path d="M0 2h16M0 8h16M0 14h16" stroke="#ddd" stroke-width="2"/></svg></button>
      </div>
    </div>
  </footer>
</body>
</html>
```
FILE: styles.css
```css
* {
  box-sizing: border-box;
}

body {
  margin: 0;
  height: 100vh;
  display: flex;
  flex-direction: column;
  overflow: hidden;
  background-color: #373737;
  color: #f0f0f0;
  font-family: "Open Sans", "Noto Sans", sans-serif;
  font-size: 12px;
  line-height: 16px;
}

button,
input,
select {
  font: inherit;
  color: inherit;
  background: none;
  border: none;
  padding: 0;
  margin: 0;
}

button {
  display: flex;
  align-items: center;
  justify-content: center;
  white-space: nowrap;
}

svg {
  flex: none;
  display: block;
}

.w {
  fill: none;
  stroke: #e2e2e2;
}

.b {
  fill: none;
  stroke: #6fb8ee;
}

.wf {
  fill: #e6e6e6;
}

.bf {
  fill: #7cc4f6;
}

.yf {
  fill: #ffcf7a;
}

.caret {
  flex: none;
  width: 0;
  height: 0;
  border: 3px solid transparent;
  border-top-color: #fff;
  border-bottom: none;
}

.caret.wide {
  border-width: 4px;
  border-bottom: none;
}

.caret.dark {
  border-top-color: #222;
}

/* title bar */

.titlebar {
  position: relative;
  flex: none;
  display: flex;
  height: 25px;
  background-color: #5e2215;
  border-bottom: 1px solid #2b2b2b;
}

.app-menu {
  position: absolute;
  left: 0;
  top: 0;
  z-index: 2;
  width: 41px;
  height: 41px;
  justify-content: flex-start;
  align-items: flex-start;
  padding: 2px 0 0 4px;
  border: 1px solid #2a0d0d;
  background: linear-gradient(#c9c9c9, #8c8c8c 45%, #606060 60%, #8a8a8a);
}

.app-menu .caret {
  position: absolute;
  right: 3px;
  top: 17px;
}

.quick-access {
  display: flex;
  align-items: center;
  width: 303px;
  padding-left: 46px;
  background-color: #a4a4a6;
}

.quick-access button {
  width: 24px;
  height: 24px;
}

.quick-access .narrow {
  width: 12px;
}

.quick-access .customize {
  flex-direction: column;
  width: 16px;
  gap: 2px;
}

.customize::before {
  content: "";
  width: 8px;
  height: 2px;
  background-color: #fff;
}

.title {
  flex: 1;
  display: flex;
  justify-content: center;
  gap: 14px;
  margin: 0;
  color: #180805;
  font-size: 11px;
  font-weight: normal;
  line-height: 24px;
}

.info-center {
  display: flex;
  align-items: center;
  width: 447px;
  background-color: #a4a4a6;
}

.info-center .fold {
  width: 14px;
}

.search {
  width: 180px;
  height: 22px;
  padding: 0 4px;
  background-color: #6e6e70;
  border: 1px solid #333;
  font-size: 11px;
}

.search::placeholder {
  color: #d0d0d0;
  font-style: italic;
}

.info-center button {
  height: 24px;
  width: 24px;
}

.info-center .sign-in {
  width: 118px;
  gap: 6px;
  justify-content: flex-start;
  margin-right: 8px;
}

.sign-in .caret {
  margin-left: auto;
}

.info-center .with-caret {
  width: 38px;
  gap: 6px;
  justify-content: flex-start;
}

.info-center .with-caret:last-child {
  margin-left: 6px;
}

.window-controls {
  display: flex;
  width: 162px;
  padding-left: 24px;
}

.window-controls button {
  width: 45px;
}

/* ribbon */

.ribbon-tabs {
  flex: none;
  display: flex;
  align-items: flex-end;
  height: 20px;
  padding-left: 47px;
  background-color: #535353;
  color: #dcdcdc;
  border-bottom: 1px solid #2f3133;
}

.ribbon-tabs button {
  height: 19px;
  padding: 0 8px 0 9px;
}

.ribbon-tabs .active {
  height: 18px;
  padding: 0 7px;
  color: #fff;
  background: linear-gradient(#6c6c6c, #5b5b5b);
  border: 1px solid #2f3133;
  border-bottom: none;
}

.ribbon-tabs .minimize {
  gap: 5px;
  padding-left: 22px;
}

.ribbon {
  flex: none;
  display: flex;
  height: 98px;
  background: linear-gradient(#4e5052, #353535);
  border-bottom: 1px solid #8a8a8a;
}

.panel {
  flex: none;
  display: flex;
  flex-direction: column;
  background-color: #5b5b5b;
  border-left: 1px solid #6d6d6d;
  border-right: 1px solid #3a3c3e;
}

.panel-body {
  flex: 1;
  display: grid;
  padding-top: 4px;
}

.panel h2 {
  position: relative;
  display: flex;
  align-items: center;
  justify-content: center;
  gap: 6px;
  height: 18px;
  margin: 0;
  font-size: 12px;
  font-weight: normal;
  color: #fff;
  background: linear-gradient(#4a4b4d, #525354);
  border-bottom: 1px solid #2f3133;
}

.launcher {
  position: absolute;
  right: 4px;
  top: 6px;
}

.panel.view h2 {
  justify-content: flex-start;
  padding-left: 4px;
}

.draw { width: 226px; }
.modify { width: 250px; }
.annotation { width: 189px; }
.layers { width: 273px; }
.block { width: 161px; }
.properties { width: 264px; }
.groups { width: 69px; }
.utilities { width: 98px; }
.clipboard { width: 80px; }
.view { width: 61px; }

.draw .panel-body { grid-template-columns: 42px 48px 50px 43px 1fr; }
.modify .panel-body { grid-template-columns: 73px 69px 75px 1fr; padding-left: 5px; }
.annotation .panel-body { grid-template-columns: 46px 60px 1fr; }
.layers .panel-body { grid-template-columns: 62px 1fr; }
.block .panel-body { grid-template-columns: 43px 1fr; }
.properties .panel-body { grid-template-columns: 62px 1fr; }
.groups .panel-body { grid-template-columns: 43px 1fr; }
.utilities .panel-body { grid-template-columns: 71px 1fr; }
.clipboard .panel-body { grid-template-columns: 54px 1fr; }

.big {
  flex-direction: column;
  justify-content: flex-start;
  padding-top: 3px;
  line-height: 15px;
}

.big svg {
  height: 34px;
  margin-bottom: 1px;
}

.big .caret {
  margin-top: 3px;
}

.stack {
  display: flex;
  flex-direction: column;
}

.tool {
  justify-content: flex-start;
  gap: 5px;
  height: 24px;
  padding-left: 1px;
}

.draw .stack,
.annotation .stack {
  padding-left: 3px;
}

.draw .tool {
  gap: 7px;
}

.tool.split .caret {
  margin-left: 2px;
}

.modify .split .caret {
  margin-left: auto;
  margin-right: 14px;
}

.groups .pressed {
  margin-right: 2px;
  background: linear-gradient(#6a9fd0, #5a5aa0);
  outline: 1px solid #2f3f55;
}

.combo {
  display: flex;
  align-items: center;
  height: 22px;
  padding: 0 2px 0 4px;
  color: #fff;
  background: linear-gradient(#6a6b6d, #505153);
  border: 1px solid #2b2c2e;
}

.combo select {
  flex: 1;
  min-width: 0;
  appearance: none;
}

.layers .combo {
  margin: 1px 2px 1px 0;
}

.swatch {
  width: 14px;
  height: 14px;
  margin-right: 5px;
  background-color: #fff;
  border: 1px solid #222;
}

.layer-combo .swatch {
  margin-left: -6px;
}

.swatch.large {
  width: 16px;
  height: 16px;
  margin: 0 10px 0 8px;
  border: none;
}

.line {
  width: 64px;
  height: 1px;
  margin-right: 2px;
  background-color: #fff;
}

.icon-row {
  display: flex;
  padding-left: 3px;
}

.icon-row button {
  width: 24px;
  height: 24px;
  justify-content: flex-start;
}

.icon-row .tool {
  width: auto;
  padding: 0;
}

.prop-grid {
  display: grid;
  grid-template-columns: 16px 1fr;
  grid-auto-rows: 24px;
  align-items: center;
  column-gap: 3px;
  padding-right: 2px;
}

/* drawing tabs */

.file-tabs {
  flex: none;
  display: flex;
  align-items: flex-end;
  height: 30px;
  padding-left: 22px;
  background-color: #373737;
  border-bottom: 3px solid #5a5a5a;
}

.file-tab,
.layout-tab {
  position: relative;
  z-index: 0;
}

.file-tab {
  min-width: 123px;
  height: 23px;
  padding: 0 12px 0 9px;
  justify-content: space-between;
  gap: 4px;
  color: #b4b4bc;
}

.file-tab::before,
.file-tab::after {
  content: "";
  position: absolute;
  z-index: -1;
  top: 0;
  bottom: 0;
  width: 52%;
  background: linear-gradient(#5c5e5e, #505050);
}

.file-tab::before {
  left: 0;
  border-radius: 8px 0 0 0;
  transform: skewX(-16deg);
}

.file-tab::after {
  right: 0;
  border-radius: 0 10px 0 0;
  border-right: 1px solid #747474;
  transform: skewX(16deg);
}

.file-tab.active {
  color: #fff;
  z-index: 1;
}

.file-tab.active::before,
.file-tab.active::after {
  background: linear-gradient(#7c7e7e, #5c5c5c);
}

.x {
  width: 8px;
  height: 8px;
  background:
    linear-gradient(45deg, transparent 42%, #363838 42% 58%, transparent 58%),
    linear-gradient(-45deg, transparent 42%, #363838 42% 58%, transparent 58%);
}

.new-tab {
  width: 22px;
  height: 16px;
  margin: 0 0 3px 10px;
  background-color: #505353;
  border: 1px solid #666;
  border-radius: 2px 8px 2px 8px;
}

/* drawing area */

.workspace {
  flex: 1;
  min-height: 0;
  background-color: #dde3f0;
  padding-right: 7px;
}

.canvas {
  position: relative;
  height: 100%;
  overflow: hidden;
  background-color: #212830;
}

.sheet {
  position: absolute;
  left: 0;
  top: 0;
}

.border {
  fill: none;
  stroke: #e6e8e8;
}

.notes {
  fill: #fff;
  font-family: Lato, sans-serif;
  font-size: 4px;
  font-weight: bold;
}

.notes .scale {
  font-size: 5px;
}

.ucs {
  position: absolute;
  left: 14px;
  bottom: 10px;
  fill: #fff;
  font-size: 18px;
  font-weight: 300;
}

.viewport-label {
  position: absolute;
  left: 3px;
  top: 6px;
  display: flex;
}

.viewport-controls {
  position: absolute;
  right: 6px;
  top: 6px;
  display: flex;
}

.viewport-controls button {
  width: 20px;
  height: 18px;
}

.viewcube {
  position: absolute;
  right: 13px;
  top: 33px;
  display: flex;
  flex-direction: column;
  align-items: center;
  gap: 14px;
}

.viewcube text {
  fill: #b4b5b6;
  font-family: "Liberation Sans", sans-serif;
  font-size: 22px;
  font-weight: bold;
  text-anchor: middle;
}

.viewcube .face {
  fill: #4c4c4e;
  font-size: 12px;
}

.wcs {
  gap: 6px;
  width: 48px;
  height: 18px;
  color: #4e4e50;
  background-color: #98999b;
  border: 1px solid #b0b0b0;
  border-radius: 4px;
  font-family: "Liberation Sans", sans-serif;
  font-size: 11px;
}

.navbar {
  position: absolute;
  right: 4px;
  top: 236px;
  border-radius: 4px;
  background-color: #5c5f62;
  outline: 1px solid #15191d;
}

/* command line */

.command {
  position: absolute;
  left: 558px;
  bottom: 1px;
  width: 804px;
}

.history {
  display: flex;
  flex-direction: column;
  align-items: flex-start;
  gap: 5px;
  margin: 0 0 2px 62px;
  font-family: "DejaVu Sans Mono", monospace;
  font-size: 12px;
  line-height: 15px;
}

.history p {
  margin: 0;
  padding: 0 2px;
  background-color: #5a5b5bf0;
  color: #d4d4d4;
  border-radius: 2px;
}

.history .old {
  background-color: #565758d0;
  color: #b8b8b8;
}

.history .latest {
  color: #fff;
}

.command-bar {
  display: flex;
  height: 26px;
  border-radius: 2px;
  overflow: hidden;
}

.command-tools {
  display: flex;
  align-items: center;
  gap: 8px;
  width: 56px;
  padding-left: 3px;
  background: linear-gradient(#6c6d6f, #3e3f41);
}

.grip {
  width: 5px;
  height: 16px;
  background: repeating-linear-gradient(#8a8a8a 0 2px, transparent 2px 4px);
}

.command-input {
  flex: 1;
  display: flex;
  align-items: center;
  gap: 6px;
  padding-left: 4px;
  background-color: #c6c8cae8;
}

.command-input input {
  flex: 1;
  color: #333;
  font-family: "DejaVu Sans Mono", monospace;
}

.command-input input::placeholder {
  color: #77797b;
  font-style: italic;
}

.recent {
  width: 14px;
  background-color: #c6c8cae8;
}

/* layout tabs and status bar */

.bottom {
  flex: none;
  display: flex;
  justify-content: space-between;
  height: 29px;
  background-color: #373737;
  border-top: 1px solid #4c4c52;
}

.layout-tabs {
  display: flex;
  padding-left: 12px;
}

.layout-tab {
  height: 17px;
  padding: 0 10px;
  margin-right: 3px;
  color: #b0b0b4;
  background: linear-gradient(#4c4c4c, #666);
  border-radius: 0 0 10px 10px;
}

.layout-tab.active {
  color: #fff;
  font-weight: bold;
  background: linear-gradient(#555, #868686);
}

.layout-tab.add {
  width: 22px;
  padding: 0;
  border: 1px solid #5c5e5e;
  border-radius: 6px 2px 8px 2px;
}

.status {
  display: flex;
  gap: 2px;
  padding-bottom: 1px;
}

.group {
  display: flex;
  align-items: center;
  background-color: #4e4f51;
  border: 1px solid #7a7a7a;
}

.group button {
  width: 23px;
  height: 23px;
}

.group:last-child button {
  width: 24px;
}

.group .on {
  width: 22px;
  margin: 0 1px;
  background-color: #5f8dc2;
}

.group .drop {
  width: 15px;
}

.group .space {
  width: 46px;
}

.group .ratio {
  width: 34px;
  gap: 4px;
}
```
